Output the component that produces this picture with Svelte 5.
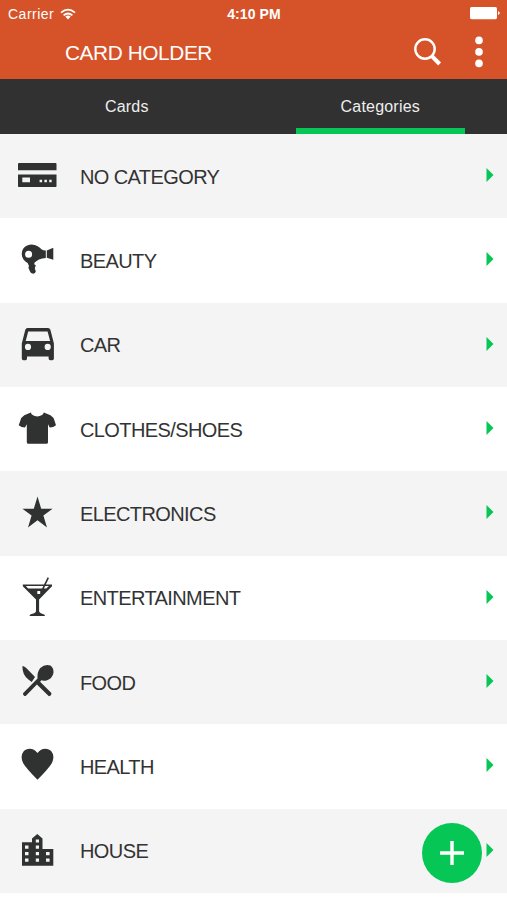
<script lang="ts">
  type Category = { key: string; name: string }

  const tabs = ['Cards', 'Categories']
  let active = $state('Categories')

  const categories: Category[] = [
    { key: 'none', name: 'NO CATEGORY' },
    { key: 'beauty', name: 'BEAUTY' },
    { key: 'car', name: 'CAR' },
    { key: 'clothes', name: 'CLOTHES/SHOES' },
    { key: 'electronics', name: 'ELECTRONICS' },
    { key: 'entertainment', name: 'ENTERTAINMENT' },
    { key: 'food', name: 'FOOD' },
    { key: 'health', name: 'HEALTH' },
    { key: 'house', name: 'HOUSE' },
  ]

  // Filled glyphs on a 60x50 grid; holes are cut with the even-odd rule.
  const icons: Record<string, string> = {
    none: 'M9 12H45.5Q46.5 12 46.5 13V19.3H8V13Q8 12 9 12ZM8 23.6H46.5V34.9Q46.5 36.1 45.3 36.1H9.2Q8 36.1 8 34.9ZM12.3 26.4V31.2H20V26.4ZM29.6 28.8V31.3H32.1V28.8ZM34.4 28.8V31.3H36.9V28.8ZM39.2 28.8V31.3H41.7V28.8Z',
    beauty:
      'M21.5 9.5C26 9.5 29 11.8 31.5 14.2Q33 15.6 35.8 15.6V23Q32 23 29 24.6Q26.5 26 24.6 27.4L24.2 29.3L25.8 30.2L24.8 33.2L25.8 36.5Q25.5 38.6 23.2 38.8Q20.5 38.6 20 36.5L18.4 32.8L19 31L17.6 28C14 26 11.8 22.8 11.8 19C11.8 13 16.5 9.5 21.5 9.5ZM18.6 15.8A3.5 3.5 0 1 0 18.6 22.8A3.5 3.5 0 1 0 18.6 15.8ZM36.8 15.6L43.3 12.7V24.8L36.8 22.8Z',
    car: 'M17.5 8H38Q39.8 8 40.4 9.7L43.9 23.5V38.6Q43.9 40.2 42.2 40.2H40.3Q38.6 40.2 38.6 38.6V36.5H17V38.6Q17 40.2 15.5 40.2H13.5Q11.8 40.2 11.8 38.6V23.5L15.3 9.7Q15.9 8 17.5 8ZM18.2 11.5L15.7 21H40.1L37.6 11.5ZM18 23.8A3.1 3.1 0 1 0 18 30A3.1 3.1 0 1 0 18 23.8ZM37.7 23.8A3.1 3.1 0 1 0 37.7 30A3.1 3.1 0 1 0 37.7 23.8Z',
    clothes:
      'M20.8 8.6Q22 12.4 27.3 12.4Q32.6 12.4 33.8 8.6L40.5 11.3Q43.5 13 44.6 17L46 21.2Q43.5 23.4 39.7 23.6L38 20.3V38.2Q38 39.7 36.5 39.7H18.3Q16.8 39.7 16.8 38.2V20.3L15 23.6Q11.3 23.4 8.7 21.2L10.2 17Q11.3 13 14.3 11.3Z',
    electronics:
      'M27.5 8.6L31.2 20.7H42.6L33.4 27.6L37 39.5L27.5 32.3L18 39.5L21.6 27.6L12.4 20.7H23.8Z',
    entertainment:
      'M12.8 11.6H34L37.6 4.3L39 5L35.8 11.6H42V13.2L29.1 26.5V38Q29.3 40 33 40.9Q35 41.4 35 43H19.5Q19.5 41.4 21.5 40.9Q26 40 26 38V26.5L12.8 13.2ZM15.8 13L18.2 15.4H32.1L33.3 13ZM35.1 13L33.9 15.4H36.4L38.8 13ZM27.3 18V21H30.2V18Z',
    food: 'M12.4 9Q14 9 16 10.8L25 20L21.7 25L18.4 22.4Q12.2 18 12.4 9ZM30.3 11Q35 6.5 40.5 8.5Q43.8 11 43.5 15.8Q42.5 21.7 36.5 23.4Q33.5 24.2 31.4 23.3L30.1 24.8L41.4 36Q41.6 38.7 38.9 39.2L26.9 27.6L15.7 39Q12.9 39 13 36.2L27.5 21.4Q27 15 30.3 11Z',
    health:
      'M27.5 12C31 6.8 38 6.4 41.5 10.5Q45.2 15.2 41.8 22.2Q39 27 27.5 38.8Q16 27 13.2 22.2Q9.8 15.2 13.5 10.5C17 6.4 24 6.8 27.5 12Z',
    house:
      'M12 16.3H22V12.4L27.3 8L32.5 12.4V23H43.3V39.7H12ZM25.8 13.5V16.5H29V13.5ZM15 19.5V22.7H18.5V19.5ZM25.8 19.5V22.7H29V19.5ZM15 26V29.2H18.5V26ZM25.8 26V29.2H29V26ZM36 26V29.2H39.6V26ZM15 32.5V35.7H18.5V32.5ZM25.8 32.5V35.7H29V32.5ZM36 32.5V35.7H39.6V32.5Z',
  }
</script>

<div class="screen">
  <header>
    <div class="status">
      <span class="carrier">
        Carrier
        <svg width="16" height="12" viewBox="0 0 16 12" fill="none" stroke="#fff" stroke-width="1.8">
          <path d="M1 4.6Q8-1.4 15 4.6M3.6 7.4Q8 3.6 12.4 7.4" />
          <path d="M5.3 8.6Q8 6.6 10.7 8.6L8 11.5Z" fill="#fff" stroke="none" />
        </svg>
      </span>
      <span class="time">4:10 PM</span>
      <svg class="battery" width="30" height="13" viewBox="0 0 30 13" fill="#fff">
        <rect width="27" height="12.2" rx="1.6" />
        <path d="M28 4.3Q29.8 4.8 29.8 6.1T28 7.9Z" />
      </svg>
    </div>
    <div class="bar">
      <h1>CARD HOLDER</h1>
      <button aria-label="Search">
        <svg width="28" height="29" viewBox="0 0 28 29" fill="none" stroke="#fff">
          <circle cx="11" cy="11" r="9.7" stroke-width="2.4" />
          <path d="M17.6 17.8L25.6 26" stroke-width="4" />
        </svg>
      </button>
      <button class="more" aria-label="More">
        <svg width="8" height="32" viewBox="0 0 8 32" fill="#fff">
          <circle cx="4" cy="4.4" r="3.8" />
          <circle cx="4" cy="15.9" r="3.8" />
          <circle cx="4" cy="27.4" r="3.8" />
        </svg>
      </button>
    </div>
  </header>

  <nav>
    {#each tabs as tab (tab)}
      <button class="tab" class:active={active === tab} onclick={() => (active = tab)}>
        <span>{tab}</span>
      </button>
    {/each}
  </nav>

  <ul>
    {#each categories as c (c.key)}
      <li>
        <svg width="60" height="50" viewBox="0 0 60 50">
          <path d={icons[c.key]} fill="#303131" fill-rule="evenodd" />
        </svg>
        <span class="name">{c.name}</span>
        <svg class="arrow" width="8" height="14" viewBox="0 0 8 14">
          <path d="M0.5 0L7.5 7L0.5 14Z" fill="#06c755" />
        </svg>
      </li>
    {/each}
  </ul>

  <button class="add" aria-label="Add category">
    <svg width="24" height="24" viewBox="0 0 24 24" stroke="#fff" stroke-width="3.4">
      <path d="M12 0V24M0 12H24" />
    </svg>
  </button>
</div>

<style>
  :global(body) {
    background: #fff;
  }
  .screen {
    position: relative;
    width: 507px;
    height: 900px;
    overflow: hidden;
    font-family: 'Liberation Sans', Arial, sans-serif;
    color: #333;
  }
  button {
    border: 0;
    padding: 0;
    background: none;
    font: inherit;
    letter-spacing: inherit;
    color: inherit;
  }
  svg {
    display: block;
    flex: none;
  }
  header {
    height: 79px;
    background: #d65329;
    color: #fff;
  }
  .status {
    display: grid;
    grid-template-columns: 1fr auto 1fr;
    align-items: center;
    height: 27px;
    padding: 0 7px 0 8px;
    font-size: 14px;
  }
  .carrier {
    display: flex;
    align-items: center;
    gap: 6px;
    letter-spacing: 0.5px;
  }
  .time {
    font-weight: 700;
    letter-spacing: 0.1px;
  }
  .battery {
    justify-self: end;
  }
  .bar {
    display: flex;
    align-items: center;
    height: 50px;
    padding: 0 24px 0 65px;
  }
  h1 {
    flex: 1;
    margin: 0;
    padding-top: 2px;
    font-size: 20.8px;
    font-weight: 400;
    letter-spacing: -0.4px;
  }
  .more {
    margin-left: 33px;
  }
  nav {
    display: grid;
    grid-template-columns: 1fr 1fr;
    height: 55px;
    background: #313131;
    color: #eee;
    font-size: 16px;
    letter-spacing: 0.2px;
  }
  .tab {
    display: flex;
    justify-content: center;
  }
  .tab span {
    box-sizing: border-box;
    width: 169px;
    height: 55px;
    padding-top: 19px;
    border-bottom: 6px solid transparent;
  }
  .tab.active span {
    border-color: #06c755;
  }
  ul {
    margin: 0;
    padding: 0;
    list-style: none;
  }
  li {
    display: flex;
    align-items: center;
    box-sizing: border-box;
    height: 84.33px;
    padding: 0 13px 0 10px;
  }
  li:nth-child(odd) {
    background: #f4f4f4;
  }
  .name {
    flex: 1;
    margin-left: 10px;
    padding-top: 2px;
    font-size: 20px;
    letter-spacing: -0.6px;
  }
  .arrow {
    margin-bottom: 2px;
  }
  .add {
    position: absolute;
    left: 422px;
    top: 823px;
    display: flex;
    align-items: center;
    justify-content: center;
    width: 60px;
    height: 60px;
    border-radius: 50%;
    background: #06c755;
  }
</style>
